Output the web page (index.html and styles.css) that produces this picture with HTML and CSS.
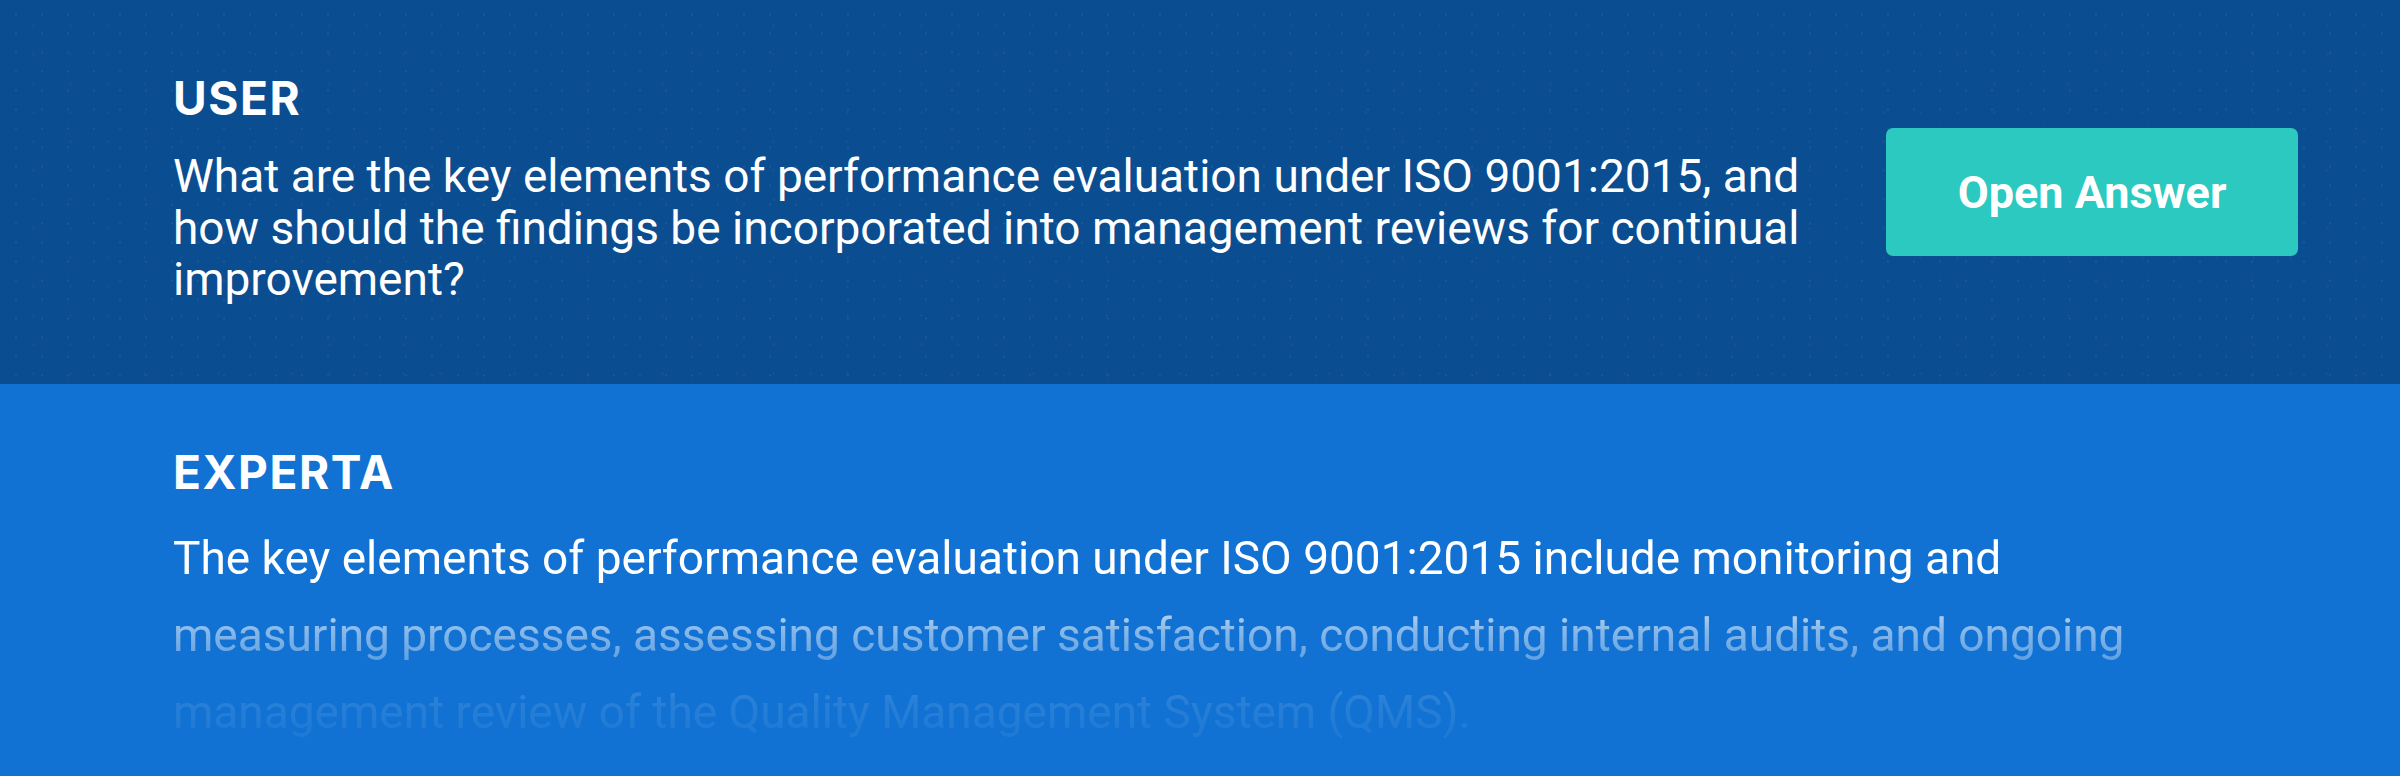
FILE: index.html
```html
<!DOCTYPE html>
<html lang="en">
<head>
<meta charset="utf-8">
<title>Chat</title>
<link rel="stylesheet" href="styles.css">
</head>
<body>
  <section class="msg msg-user">
    <div class="msg-body">
      <h2 class="role">USER</h2>
      <p class="question">What are the key elements of performance evaluation under ISO 9001:2015, and how should the findings be incorporated into management reviews for continual improvement?</p>
    </div>
    <button class="open-btn" type="button">Open Answer</button>
  </section>
  <section class="msg msg-expert">
    <div class="msg-body">
      <h2 class="role">EXPERTA</h2>
      <p class="answer">The key elements of performance evaluation under ISO 9001:2015 include monitoring and measuring processes, assessing customer satisfaction, conducting internal audits, and ongoing management review of the Quality Management System (QMS).</p>
    </div>
  </section>
</body>
</html>
```

FILE: styles.css
```css
html, body {
  margin: 0;
  padding: 0;
}

body {
  width: 2400px;
  height: 776px;
  overflow: hidden;
  background: #1172d3;
  font-family: Roboto, "Liberation Sans", sans-serif;
  color: #ffffff;
}

.msg {
  box-sizing: border-box;
  display: flex;
  padding: 0 102px 0 173px;
}

.msg-user {
  height: 384px;
  align-items: center;
  justify-content: space-between;
  background-color: #0a4d90;
  background-image:
    radial-gradient(circle, rgba(255, 255, 255, 0.07) 0.8px, transparent 1.4px),
    radial-gradient(circle, rgba(255, 255, 255, 0.05) 0.8px, transparent 1.4px);
  background-size: 26px 19px, 37px 29px;
  background-position: 3px 5px, 15px 11px;
}

.msg-expert {
  height: 392px;
  align-items: flex-start;
  background: #1172d3;
  overflow: hidden;
}

.msg-body {
  align-self: flex-start;
}

.msg-user .msg-body {
  width: 1665px;
  padding-top: 70px;
}

.msg-expert .msg-body {
  width: 2010px;
  padding-top: 60px;
}

.role {
  margin: 0;
  font-family: Inter, "DejaVu Sans", sans-serif;
  font-weight: 700;
  font-size: 46px;
  line-height: 56px;
  letter-spacing: 1.6px;
}

.question {
  margin: 25px 0 0;
  font-size: 46px;
  line-height: 51.5px;
  font-weight: 400;
}

.answer {
  margin: 20px 0 0;
  font-size: 46px;
  line-height: 77px;
  font-weight: 400;
  -webkit-mask-image: linear-gradient(to bottom, #000 0%, #000 27%, rgba(0, 0, 0, 0.5) 48%, rgba(0, 0, 0, 0.1) 78%, rgba(0, 0, 0, 0.04) 100%);
  mask-image: linear-gradient(to bottom, #000 0%, #000 27%, rgba(0, 0, 0, 0.5) 48%, rgba(0, 0, 0, 0.1) 78%, rgba(0, 0, 0, 0.04) 100%);
}

.open-btn {
  width: 412px;
  height: 128px;
  flex: none;
  border: 0;
  border-radius: 7px;
  background: #2bc9c0;
  color: #ffffff;
  font-family: Roboto, "Liberation Sans", sans-serif;
  font-weight: 700;
  font-size: 45px;
  cursor: pointer;
  padding: 0;
}
```
